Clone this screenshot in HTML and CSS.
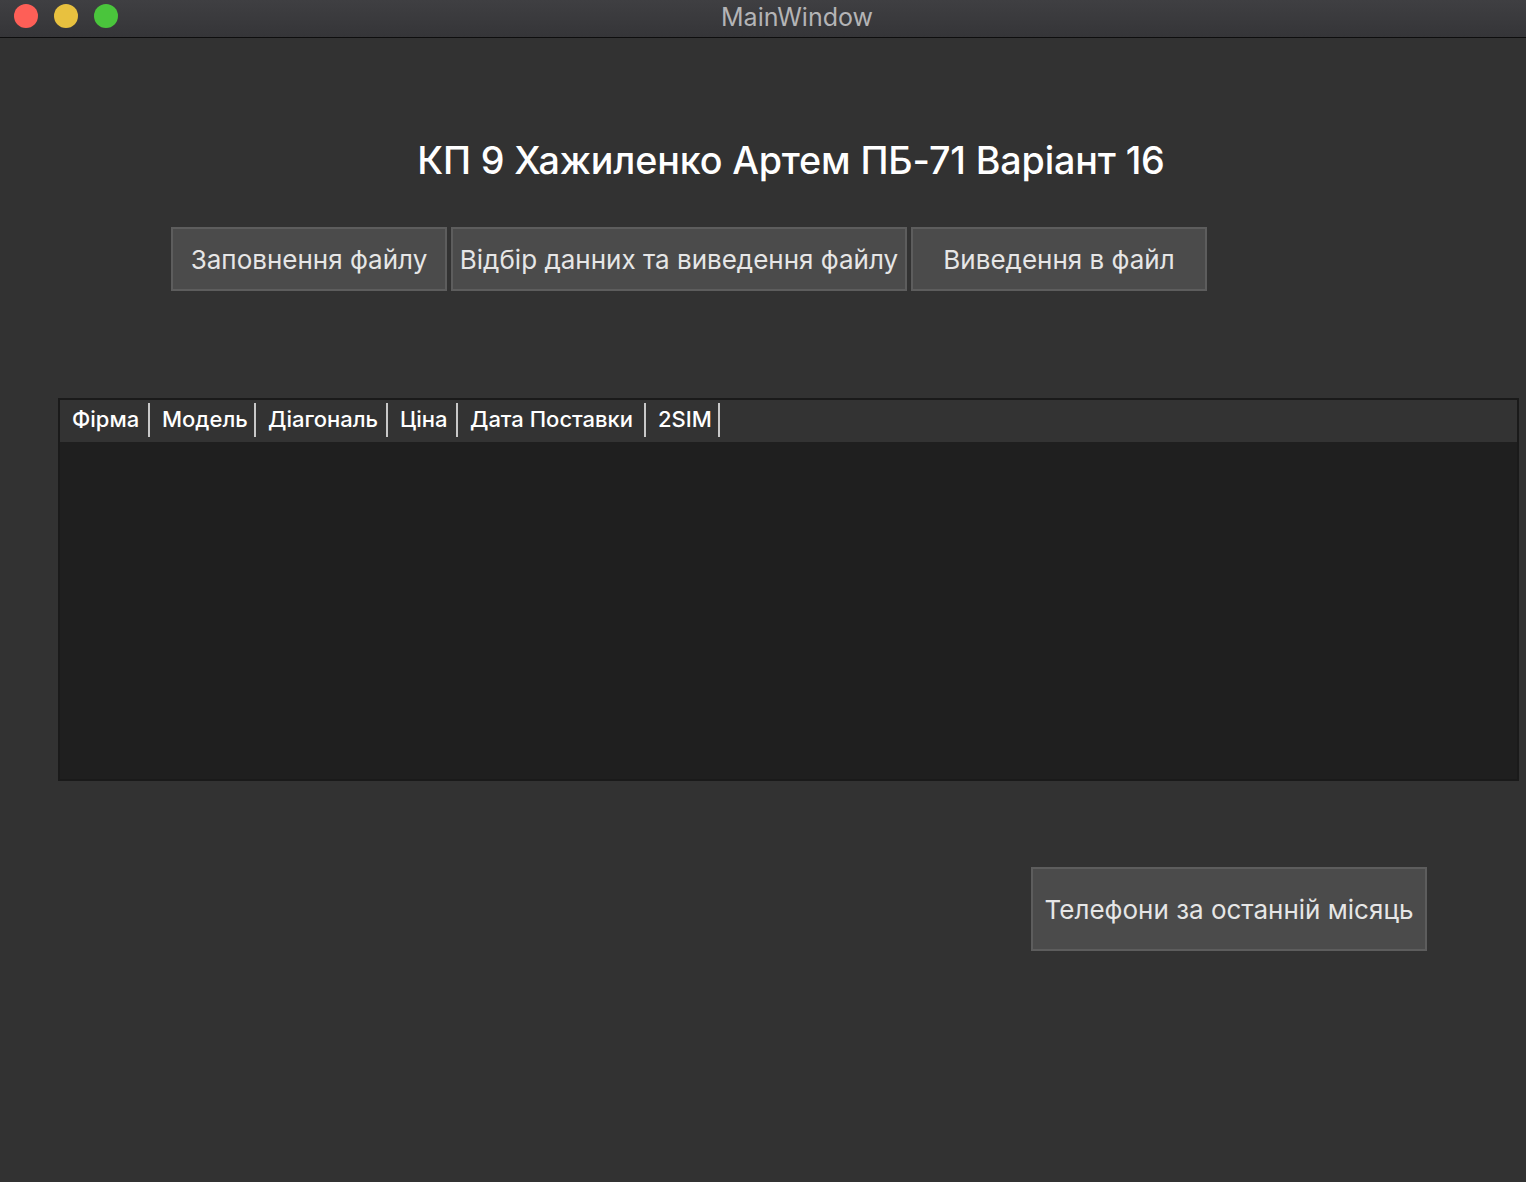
FILE: index.html
```html
<!DOCTYPE html>
<html lang="uk">
<head>
<meta charset="utf-8">
<title>MainWindow</title>
<link rel="stylesheet" href="styles.css">
</head>
<body>
<div class="window">
  <div class="titlebar">
    <div class="lights">
      <span class="light red"></span>
      <span class="light yellow"></span>
      <span class="light green"></span>
    </div>
    <div class="wtitle">MainWindow</div>
  </div>
  <div class="content">
    <h1 class="heading">КП 9 Хажиленко Артем ПБ-71 Варіант 16</h1>
    <div class="toolbar">
      <button class="btn b1">Заповнення файлу</button>
      <button class="btn b2">Відбір данних та виведення файлу</button>
      <button class="btn b3">Виведення в файл</button>
    </div>
    <div class="table">
      <div class="thead">
        <div class="th c1">Фірма</div>
        <div class="th c2">Модель</div>
        <div class="th c3">Діагональ</div>
        <div class="th c4">Ціна</div>
        <div class="th c5">Дата Поставки</div>
        <div class="th c6">2SIM</div>
      </div>
      <div class="tbody"></div>
    </div>
    <div class="bottom">
      <button class="btn b4">Телефони за останній місяць</button>
    </div>
  </div>
</div>
</body>
</html>
```
FILE: styles.css
```css
* { box-sizing: border-box; }
html, body {
  margin: 0;
  padding: 0;
  background: #323232;
  font-family: Inter, "Noto Sans", "DejaVu Sans", sans-serif;
}
.window {
  width: 1526px;
  height: 1182px;
  display: flex;
  flex-direction: column;
  overflow: hidden;
}
.titlebar {
  height: 38px;
  flex: none;
  background: linear-gradient(#3f3f42, #353538);
  border-bottom: 1px solid #0e0e0e;
  position: relative;
  display: flex;
  align-items: center;
  justify-content: center;
}
.lights {
  position: absolute;
  left: 14px;
  top: 4px;
  display: flex;
  gap: 16px;
}
.light {
  width: 24px;
  height: 24px;
  border-radius: 50%;
  display: block;
}
.red { background: #fe5f57; }
.yellow { background: #e8c13f; }
.green { background: #4ac53c; }
.wtitle {
  color: #b4b4b6;
  font-size: 25px;
  margin-left: 68px;
  margin-top: -4px;
}
.content {
  flex: 1;
  display: flex;
  flex-direction: column;
}
.heading {
  margin: 100px 0 0 0;
  padding-left: 56px;
  text-align: center;
  color: #ffffff;
  font-size: 37.7px;
  font-weight: 500;
  line-height: 44px;
  letter-spacing: -0.15px;
}
.toolbar {
  display: flex;
  gap: 4px;
  margin: 45px 0 0 171px;
}
.btn {
  font-family: inherit;
  background: #4b4b4b;
  border: 2px solid #5d5d5d;
  color: #e6e6e6;
  font-size: 26px;
  font-weight: 400;
  height: 64px;
  margin: 0;
  padding: 0;
  display: flex;
  align-items: center;
  justify-content: center;
  flex: none;
}
.b1 { width: 276px; }
.b2 { width: 456px; }
.b3 { width: 296px; }
.table {
  margin: 107px 0 0 58px;
  width: 1461px;
  height: 383px;
  border: 2px solid #1a1a1a;
  display: flex;
  flex-direction: column;
  background: #1f1f1f;
}
.thead {
  height: 42px;
  background: #333333;
  display: flex;
  align-items: stretch;
  flex: none;
}
.th {
  color: #ffffff;
  font-size: 22px;
  font-weight: 500;
  display: flex;
  align-items: center;
  padding: 0 0 4px 12px;
  position: relative;
  white-space: nowrap;
  flex: none;
}
.c1 { width: 90px; }
.c2 { width: 106px; }
.c3 { width: 132px; }
.c4 { width: 70px; }
.c5 { width: 188px; }
.c6 { width: 74px; }
.th::after {
  content: "";
  position: absolute;
  right: 0;
  top: 3px;
  bottom: 5px;
  width: 2px;
  background: #c8c8c8;
}
.tbody { flex: 1; }
.bottom {
  display: flex;
  margin: 86px 0 0 1031px;
}
.b4 {
  width: 396px;
  height: 84px;
}
```
